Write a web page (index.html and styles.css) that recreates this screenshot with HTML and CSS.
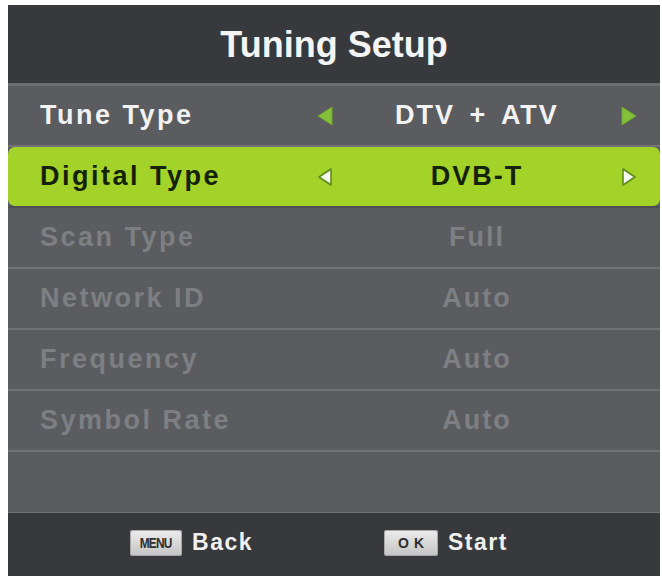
FILE: index.html
```html
<!DOCTYPE html>
<html>
<head>
<meta charset="utf-8">
<link rel="stylesheet" href="styles.css">
</head>
<body>
<div class="panel">
  <div class="header">Tuning Setup</div>
  <div class="row">
    <span class="label">Tune Type</span>
    <div class="value">
      <svg class="arrow" width="18" height="22" viewBox="0 0 18 22"><polygon points="16,2 16,20 2,11" class="tri-green"/></svg>
      <span class="val wide">DTV + ATV</span>
      <svg class="arrow" width="18" height="22" viewBox="0 0 18 22"><polygon points="2,2 2,20 16,11" class="tri-green"/></svg>
    </div>
  </div>
  <div class="row selected">
    <div class="hl">
      <span class="label">Digital Type</span>
      <div class="value">
        <svg class="arrow" width="18" height="22" viewBox="0 0 18 22"><polygon points="15,3 15,19 3,11" class="tri-white"/></svg>
        <span class="val">DVB-T</span>
        <svg class="arrow" width="18" height="22" viewBox="0 0 18 22"><polygon points="3,3 3,19 15,11" class="tri-white"/></svg>
      </div>
    </div>
  </div>
  <div class="row dim">
    <span class="label">Scan Type</span>
    <div class="value"><span class="val">Full</span></div>
  </div>
  <div class="row dim">
    <span class="label">Network ID</span>
    <div class="value"><span class="val">Auto</span></div>
  </div>
  <div class="row dim">
    <span class="label">Frequency</span>
    <div class="value"><span class="val">Auto</span></div>
  </div>
  <div class="row dim">
    <span class="label">Symbol Rate</span>
    <div class="value"><span class="val">Auto</span></div>
  </div>
  <div class="row empty"></div>
  <div class="footer">
    <div class="hint"><span class="key key-menu"><span class="key-label">MENU</span></span><span class="hint-text">Back</span></div>
    <div class="hint"><span class="key key-ok">OK</span><span class="hint-text">Start</span></div>
  </div>
</div>
</body>
</html>
```

FILE: styles.css
```css
html, body {
  margin: 0;
  padding: 0;
  background: #ffffff;
}
body {
  font-family: "Liberation Sans", Arial, sans-serif;
  font-weight: bold;
}
.panel {
  margin: 5px 2px 0 8px;
  height: 571px;
  background: #5a5c60;
  display: flex;
  flex-direction: column;
  overflow: hidden;
}
.header {
  flex: none;
  height: 81px;
  box-sizing: border-box;
  padding-top: 1px;
  background: #37393c;
  border-bottom: 3px solid #6c6e72;
  color: #f4f4f4;
  font-size: 36px;
  display: flex;
  align-items: center;
  justify-content: center;
}
.row {
  height: 61px;
  flex: none;
  box-sizing: border-box;
  border-bottom: 2px solid #717377;
  display: flex;
  align-items: center;
  padding-left: 32px;
  font-size: 27px;
  letter-spacing: 2.5px;
  color: #f2f2f2;
}
.row .label {
  flex: 1;
}
.value {
  width: 334px;
  box-sizing: border-box;
  padding: 0 6px;
  display: flex;
  align-items: center;
  justify-content: center;
  margin-right: 16px;
  letter-spacing: 2px;
}
.value .arrow {
  flex: none;
  display: block;
}
.value .val {
  flex: 1;
  text-align: center;
}
.val.wide {
  word-spacing: 5px;
}
.tri-green {
  fill: #84c03a;
  stroke: #6fa52c;
  stroke-width: 1;
  stroke-linejoin: round;
}
.tri-white {
  fill: #f6f9f0;
  stroke: #5f8a1c;
  stroke-width: 1.6;
  stroke-linejoin: round;
}
.row:first-of-type {
  border-bottom-color: #4a4b4f;
}
.row.selected {
  padding-left: 0;
  border-bottom-color: #4d4f52;
}
.hl {
  flex: 1;
  height: 100%;
  display: flex;
  align-items: center;
  padding-left: 32px;
  background: #a3d228;
  border-radius: 7px;
  color: #15220a;
}
.row.dim {
  color: #7d7f83;
}
.row.empty {
  border-bottom: 1px solid #717377;
}
.footer {
  flex: 1;
  background: #37393c;
  display: flex;
  align-items: center;
  justify-content: center;
  gap: 131px;
  padding-bottom: 4px;
  padding-right: 30px;
}
.hint {
  display: flex;
  align-items: center;
  gap: 10px;
}
.hint-text {
  color: #f0f0f0;
  font-size: 23px;
  letter-spacing: 1.5px;
}
.key {
  display: flex;
  align-items: center;
  justify-content: center;
  height: 26px;
  border-radius: 3px;
  background: linear-gradient(#ececec, #c4c4c4);
  color: #2e2e2e;
  box-shadow: inset 0 0 0 1px #a9a9a9;
}
.key-menu {
  width: 52px;
}
.key-label {
  font-size: 14px;
  letter-spacing: -1px;
  display: inline-block;
  transform: scaleX(0.85);
}
.key-ok {
  width: 54px;
  font-size: 14px;
  letter-spacing: 5px;
  padding-left: 5px;
  box-sizing: border-box;
}
```
